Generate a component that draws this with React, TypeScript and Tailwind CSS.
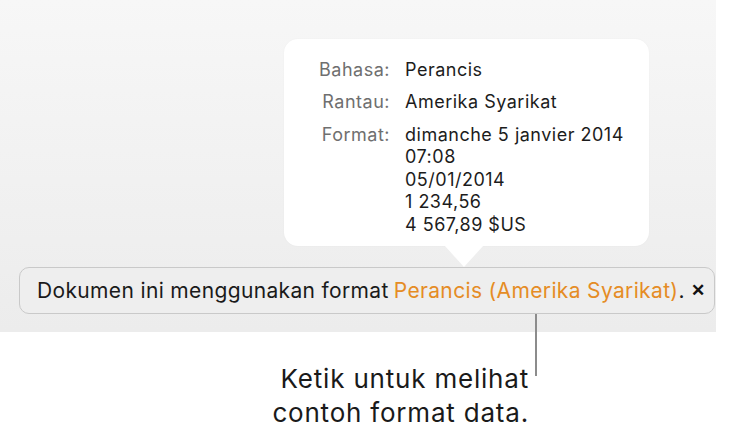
import React from "react";

export default function App() {
  const font = { fontFamily: "Inter, Roboto, 'Liberation Sans', sans-serif" };
  return (
    <div className="relative w-[739px] h-[434px] bg-white overflow-hidden" style={font}>
      <div className="w-[716px] h-[332px] bg-gradient-to-b from-[#f7f7f7] to-[#ececec] flex flex-col pt-[39px]">
        <div className="relative ml-[284px] w-[365px] h-[207px] bg-white rounded-[14px] shadow-[0_0_2px_rgba(0,0,0,0.04)]">
          <div className="grid grid-cols-[106px_1fr] gap-x-[15px] pt-[20px] text-[18px] leading-[22.5px] tracking-[0.5px]">
            <div className="text-right text-[#6f6f6f]">Bahasa:</div>
            <div className="text-[#1c1c1c]">Perancis</div>
            <div className="text-right text-[#6f6f6f] mt-[9.5px]">Rantau:</div>
            <div className="text-[#1c1c1c] mt-[9.5px]">Amerika Syarikat</div>
            <div className="text-right text-[#6f6f6f] mt-[10px]">Format:</div>
            <div className="text-[#1c1c1c] mt-[10px] flex flex-col">
              <span>dimanche 5 janvier 2014</span>
              <span>07:08</span>
              <span>05/01/2014</span>
              <span>1 234,56</span>
              <span>4 567,89 $US</span>
            </div>
          </div>
          <div className="absolute left-[160px] top-[206px] w-0 h-0 border-l-[20px] border-r-[20px] border-t-[22px] border-l-transparent border-r-transparent border-t-white" />
        </div>
        <div className="ml-[19px] mt-[21px] w-[696px] h-[47px] rounded-[10px] border border-[#c9c9c9] bg-[#eeeeee] flex items-center pl-[17px] text-[21px] tracking-[0.35px] text-[#1a1a1a]">
          <span>Dokumen ini menggunakan format </span>
          <span className="text-[#e58c25] ml-[5px]">Perancis (Amerika Syarikat)</span>
          <span>.</span>
          <span className="ml-[6px] text-[17px] font-bold text-[#111]">✕</span>
        </div>
      </div>
      <div className="absolute left-[535px] top-[314px] w-[2px] h-[62px] bg-[#8c8c8c]" />
      <div className="flex justify-end w-[529px] pt-[30px] text-[26px] leading-[34px] tracking-[0.8px] text-[#1a1a1a]">
        <div className="text-right">
          <div>Ketik untuk melihat</div>
          <div>contoh format data.</div>
        </div>
      </div>
    </div>
  );
}
